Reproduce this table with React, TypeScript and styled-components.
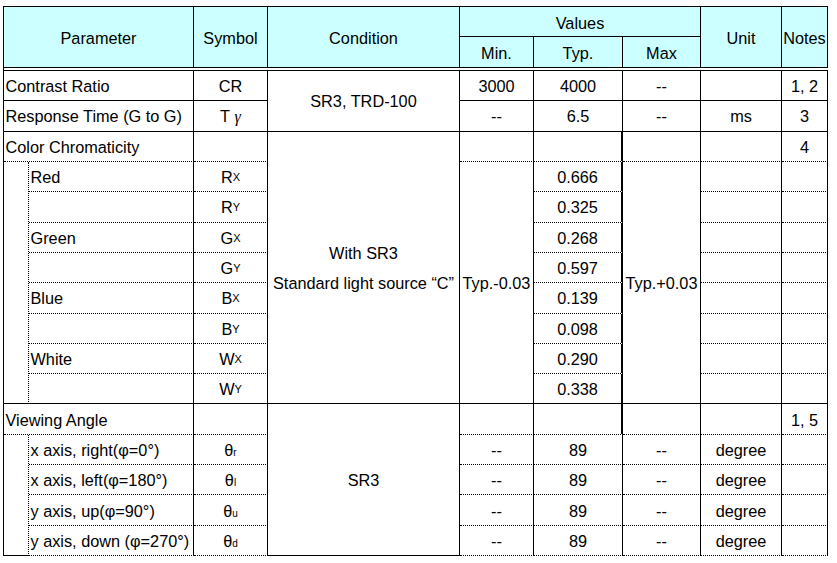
import React from "react";
import styled, { createGlobalStyle } from "styled-components";

type Line = "solid" | "dash" | "dot" | "bold" | "none";

const lineCss = (l: Line) => {
  switch (l) {
    case "solid":
      return "1px solid #000";
    case "dash":
      return "1px dotted #000";
    case "dot":
      return "1px dotted #000";
    case "bold":
      return "2px solid #000";
    default:
      return "none";
  }
};

const Global = createGlobalStyle`
  html, body { margin: 0; padding: 0; background: #fff; }
  body { font-family: "Liberation Sans", Arial, sans-serif; }
`;

const Sheet = styled.div`
  display: grid;
  grid-template-columns: 25px 165px 74px 192px 74px 89px 78px 81px 46px;
  grid-template-rows: 30px 31px 3px repeat(16, 30.3125px);
  width: max-content;
  margin: 6px 0 0 3px;
  border-left: 1px solid #000;
  border-top: 1px solid #000;
  font-family: "Liberation Sans", Arial, sans-serif;
  font-size: 16.3px;
  color: #000;
  background: #fff;
`;

const Cell = styled.div<{
  $cs?: number;
  $rs?: number;
  $r?: Line;
  $b?: Line;
  $left?: boolean;
  $head?: boolean;
}>`
  grid-column: span ${(p) => p.$cs ?? 1};
  grid-row: span ${(p) => p.$rs ?? 1};
  box-sizing: border-box;
  display: flex;
  align-items: center;
  justify-content: ${(p) => (p.$left ? "flex-start" : "center")};
  padding-left: ${(p) => (p.$left ? "1.5px" : "0")};
  padding-top: ${(p) => (p.$head ? "2px" : "1px")};
  border-right: ${(p) => lineCss(p.$r ?? "solid")};
  border-bottom: ${(p) => lineCss(p.$b ?? "solid")};
  background: ${(p) => (p.$head ? "#ccffff" : "#fff")};
  background-clip: padding-box;
  white-space: nowrap;
  line-height: 30px;
`;

const Stack = styled.div`
  display: flex;
  flex-direction: column;
  align-items: center;
  line-height: 30px;
`;

const Rule = styled.div`
  grid-column: span 9;
  border-bottom: 1px solid #000;
  background: #fff;
`;

const Small = styled.span`
  font-size: 11px;
`;

const Greek = styled.span`
  font-family: "Liberation Serif", "Times New Roman", serif;
  font-style: italic;
  font-size: 16px;
  position: relative;
  top: 1px;
`;

const Sub = styled.span`
  font-size: 10px;
  position: relative;
  top: 3px;
`;

const colorRows = [
  ["Red", "R", "X", "0.666"],
  ["", "R", "Y", "0.325"],
  ["Green", "G", "X", "0.268"],
  ["", "G", "Y", "0.597"],
  ["Blue", "B", "X", "0.139"],
  ["", "B", "Y", "0.098"],
  ["White", "W", "X", "0.290"],
  ["", "W", "Y", "0.338"],
];

const angleRows = [
  ["x axis, right(φ=0°)", "r"],
  ["x axis, left(φ=180°)", "l"],
  ["y axis, up(φ=90°)", "u"],
  ["y axis, down (φ=270°)", "d"],
];

export default function App() {
  return (
    <>
      <Global />
      <Sheet>
        {/* header */}
        <Cell $head $cs={2} $rs={2}>Parameter</Cell>
        <Cell $head $rs={2}>Symbol</Cell>
        <Cell $head $rs={2}>Condition</Cell>
        <Cell $head $cs={3}>Values</Cell>
        <Cell $head $rs={2}>Unit</Cell>
        <Cell $head $rs={2}>Notes</Cell>
        <Cell $head>Min.</Cell>
        <Cell $head>Typ.</Cell>
        <Cell $head>Max</Cell>
        <Rule />

        {/* contrast / response */}
        <Cell $left $cs={2}>Contrast Ratio</Cell>
        <Cell>CR</Cell>
        <Cell $rs={2}>SR3, TRD-100</Cell>
        <Cell>3000</Cell>
        <Cell>4000</Cell>
        <Cell>--</Cell>
        <Cell />
        <Cell>1, 2</Cell>

        <Cell $left $cs={2}>Response Time (G to G)</Cell>
        <Cell>
          T&nbsp;<Greek>γ</Greek>
        </Cell>
        <Cell>--</Cell>
        <Cell>6.5</Cell>
        <Cell>--</Cell>
        <Cell>ms</Cell>
        <Cell>3</Cell>

        {/* color chromaticity */}
        <Cell $left $cs={2} $b="dash">Color Chromaticity</Cell>
        <Cell $b="dash" />
        <Cell $rs={9}>
          <Stack>
            <span>With SR3</span>
            <span>Standard light source “C”</span>
          </Stack>
        </Cell>
        <Cell $b="dash" />
        <Cell $b="dash" $r="bold" />
        <Cell $b="dash" />
        <Cell $b="dash" />
        <Cell $b="dash">4</Cell>

        {colorRows.map(([name, s, sub, val], i) => {
          const last = i === colorRows.length - 1;
          const b: Line = last ? "solid" : "dash";
          return (
            <React.Fragment key={i}>
              {i === 0 && <Cell $rs={8} $r="dot" />}
              <Cell $left $b={b}>{name}</Cell>
              <Cell $b={b}>
                {s}
                <Small>{sub}</Small>
              </Cell>
              {i === 0 && <Cell $rs={8}>Typ.-0.03</Cell>}
              <Cell $b={b} $r="bold">{val}</Cell>
              {i === 0 && <Cell $rs={8}>Typ.+0.03</Cell>}
              <Cell $b={b} />
              <Cell $b={b} />
            </React.Fragment>
          );
        })}

        {/* viewing angle */}
        <Cell $left $cs={2} $b="dash">Viewing Angle</Cell>
        <Cell $b="dash" />
        <Cell $rs={5}>SR3</Cell>
        <Cell $b="dash" />
        <Cell $b="dash" $r="bold" />
        <Cell $b="dash" />
        <Cell $b="dash" />
        <Cell $b="dash">1, 5</Cell>

        {angleRows.map(([name, sub], i) => (
          <React.Fragment key={name}>
            {i === 0 && <Cell $rs={4} $r="dot" />}
            <Cell $left $b="dash">{name}</Cell>
            <Cell $b="dash">
              θ<Sub>{sub}</Sub>
            </Cell>
            <Cell $b="dash">--</Cell>
            <Cell $b="dash">89</Cell>
            <Cell $b="dash">--</Cell>
            <Cell $b="dash">degree</Cell>
            <Cell $b="dash" />
          </React.Fragment>
        ))}
      </Sheet>
    </>
  );
}
